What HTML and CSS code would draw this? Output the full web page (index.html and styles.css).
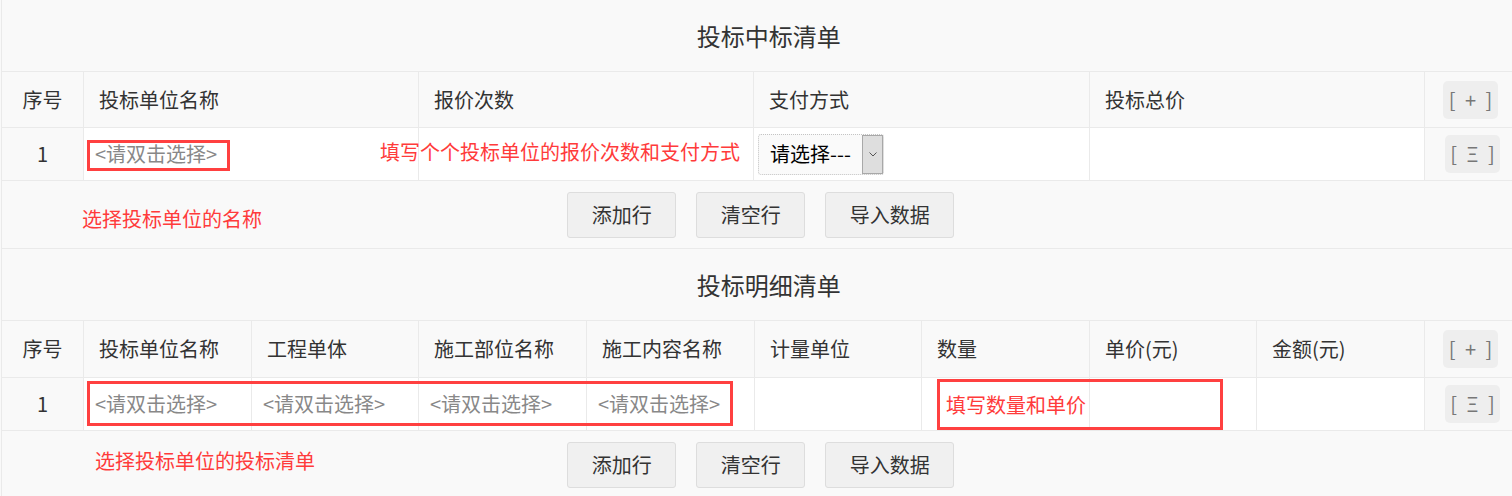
FILE: index.html
```html
<!DOCTYPE html>
<html lang="zh-CN">
<head>
    <meta charset="UTF-8">
    <title>投标清单</title>
    <link rel="stylesheet" href="styles.css">
</head>
<body>
    <div class="sheet sheet-main">
        <table class="grid">
            <colgroup>
                <col class="c-no"><col class="c-main"><col class="c-main"><col class="c-main-x"><col class="c-main"><col class="c-op">
            </colgroup>
            <tr class="row-title"><th colspan="6">投标中标清单</th></tr>
            <tr class="row-head">
                <th class="no">序号</th>
                <th>投标单位名称</th>
                <th>报价次数</th>
                <th>支付方式</th>
                <th>投标总价</th>
                <th class="op"><span class="op-btn">[ + ]</span></th>
            </tr>
            <tr class="row-body">
                <td class="no">1</td>
                <td class="pick">&lt;请双击选择&gt;</td>
                <td></td>
                <td class="cell-select">
                    <div class="select">
                        <span class="select-text">请选择---</span>
                        <span class="select-arrow">
                            <svg width="8" height="5" viewBox="0 0 8 5"><polyline points="0.5,0.5 4,4 7.5,0.5" fill="none" stroke="#555" stroke-width="1"/></svg>
                        </span>
                    </div>
                </td>
                <td></td>
                <td class="op"><span class="op-btn op-menu">[ Ξ ]</span></td>
            </tr>
            <tr class="row-tools">
                <td colspan="6">
                    <div class="tools">
                        <button>添加行</button>
                        <button>清空行</button>
                        <button>导入数据</button>
                    </div>
                </td>
            </tr>
        </table>
        <div class="mark mark-name"></div>
        <div class="note note-fill">填写个个投标单位的报价次数和支付方式</div>
        <div class="note note-name">选择投标单位的名称</div>
    </div>

    <div class="sheet sheet-detail">
        <table class="grid">
            <colgroup>
                <col class="c-no">
                <col class="c-a"><col class="c-b"><col class="c-a"><col class="c-a">
                <col class="c-b"><col class="c-a"><col class="c-b"><col class="c-a">
                <col class="c-op">
            </colgroup>
            <tr class="row-title"><th colspan="10">投标明细清单</th></tr>
            <tr class="row-head">
                <th class="no">序号</th>
                <th>投标单位名称</th>
                <th>工程单体</th>
                <th>施工部位名称</th>
                <th>施工内容名称</th>
                <th>计量单位</th>
                <th>数量</th>
                <th>单价(元)</th>
                <th>金额(元)</th>
                <th class="op"><span class="op-btn">[ + ]</span></th>
            </tr>
            <tr class="row-body">
                <td class="no">1</td>
                <td class="pick">&lt;请双击选择&gt;</td>
                <td class="pick">&lt;请双击选择&gt;</td>
                <td class="pick">&lt;请双击选择&gt;</td>
                <td class="pick">&lt;请双击选择&gt;</td>
                <td></td>
                <td></td>
                <td></td>
                <td></td>
                <td class="op"><span class="op-btn op-menu">[ Ξ ]</span></td>
            </tr>
            <tr class="row-tools">
                <td colspan="10">
                    <div class="tools">
                        <button>添加行</button>
                        <button>清空行</button>
                        <button>导入数据</button>
                    </div>
                </td>
            </tr>
        </table>
        <div class="mark mark-picks"></div>
        <div class="mark mark-qty"></div>
        <div class="note note-qty">填写数量和单价</div>
        <div class="note note-list">选择投标单位的投标清单</div>
    </div>
</body>
</html>
```

FILE: styles.css
```css
body {
    margin: 0;
    background-color: #f9f9f9;
    color: #333;
    font-family: "Noto Sans CJK SC", "Microsoft YaHei", sans-serif;
    overflow: hidden;
}

.sheet {
    position: relative;
    margin-left: 1px;
}

.grid {
    width: 1511px;
    border-collapse: collapse;
    table-layout: fixed;
    font-size: 20px;
    line-height: 24px;
}

.grid th,
.grid td {
    border: 1px solid #eaeaea;
    padding: 0 15px;
    text-align: left;
    font-weight: normal;
}

.grid th:last-child,
.grid td:last-child {
    border-right: none;
}

.c-no { width: 82px; }
.c-main { width: 335px; }
.c-main-x { width: 336px; }
.c-a { width: 168px; }
.c-b { width: 167px; }
.c-op { width: 88px; }

.row-title th {
    height: 71px;
    padding-left: 38px;
    text-align: center;
    font-size: 24px;
    color: #333;
}

.sheet-main .row-title th {
    border-top: none;
}

.row-head th {
    height: 55px;
}

.sheet-detail .row-head th {
    height: 56px;
}

.row-body td {
    height: 52px;
    background-color: #fff;
}

.row-body td.no,
.row-body td.op {
    background-color: #f9f9f9;
}

.grid .no {
    text-align: center;
    padding: 0;
}

.grid .op {
    padding: 0 0 0 18px;
}

.op-btn {
    display: inline-block;
    width: 55px;
    height: 38px;
    line-height: 38px;
    text-align: center;
    background-color: #eee;
    border-radius: 5px;
    color: #777;
    font-size: 20px;
    word-spacing: 5px;
}

.op-menu {
    margin-left: 2px;
}

.grid .pick {
    padding: 0 11px;
    color: #888;
    white-space: nowrap;
}

.grid .cell-select {
    padding: 0 4px;
}

.select {
    display: flex;
    align-items: center;
    width: 126px;
    height: 41px;
    box-sizing: border-box;
    border: 1px dotted #c4c4c4;
    border-radius: 3px;
    background-color: #fafafa;
}

.select-text {
    padding-left: 11px;
    color: #000;
    white-space: nowrap;
}

.select-arrow {
    display: flex;
    align-items: center;
    justify-content: center;
    margin-left: auto;
    width: 21px;
    height: 39px;
    box-sizing: border-box;
    background-color: #dedede;
    border: 1px solid #a8a8a8;
}

.row-tools td {
    height: 67px;
    border-bottom: none;
    padding: 0;
}

.tools {
    display: flex;
    justify-content: center;
    gap: 20px;
    padding-left: 7px;
}

.tools button {
    height: 46px;
    padding: 0 23.5px;
    background-color: #f0f0f0;
    border: 1px solid #ddd;
    border-radius: 3px;
    color: #333;
    font-family: inherit;
    font-size: 20px;
    line-height: 24px;
}

/* red notes drawn over the form */
.mark {
    position: absolute;
    box-sizing: border-box;
    border: 3px solid #ff4040;
}

.note {
    position: absolute;
    color: #ff3b3b;
    font-size: 20px;
    line-height: 24px;
    white-space: nowrap;
}

.mark-name { left: 86px; top: 140px; width: 143px; height: 31px; }
.note-fill { left: 379px; top: 140px; }
.note-name { left: 81px; top: 207px; }

.mark-picks { left: 86px; top: 133px; width: 646px; height: 45px; }
.mark-qty { left: 936px; top: 131px; width: 286px; height: 51px; }
.note-qty { left: 945px; top: 145px; }
.note-list { left: 94px; top: 201px; }
```
